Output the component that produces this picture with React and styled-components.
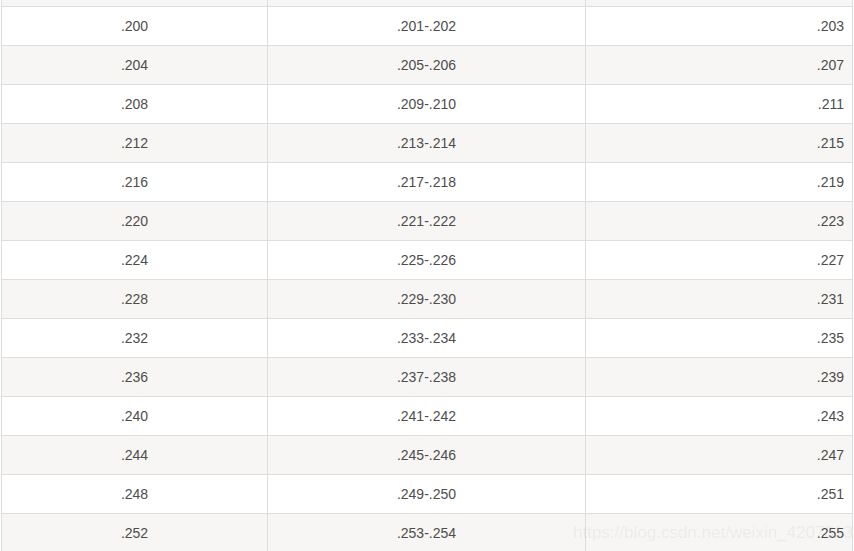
import React from "react";
import styled, { createGlobalStyle } from "styled-components";

const Global = createGlobalStyle`
  html, body { margin: 0; padding: 0; background: #ffffff; }
  body { font-family: "Liberation Sans", Arial, sans-serif; overflow: hidden; }
`;

const Viewport = styled.div`
  position: relative;
  width: 854px;
  height: 551px;
  overflow: hidden;
`;

const Table = styled.div`
  margin-left: 1px;
  width: 852px;
  box-sizing: border-box;
  border-left: 1px solid #dddddd;
  margin-top: -33px;
`;

const Row = styled.div`
  display: grid;
  grid-template-columns: 266px 318px 267px;
  height: 39px;
  box-sizing: border-box;
  border-top: 1px solid #dddddd;
  background: ${(p) => (p.$striped ? "#f7f6f4" : "#ffffff")};
`;

const Cell = styled.div`
  display: flex;
  align-items: center;
  justify-content: ${(p) => (p.$align === "right" ? "flex-end" : "center")};
  padding-right: ${(p) => (p.$align === "right" ? "8px" : "0")};
  box-sizing: border-box;
  border-right: 1px solid #dddddd;
  font-size: 14px;
  color: #4d4d4d;
  white-space: nowrap;
`;

const Watermark = styled.div`
  position: absolute;
  left: 573px;
  top: 524px;
  font-family: "Liberation Sans", Arial, sans-serif;
  font-size: 17px;
  line-height: 17px;
  color: rgba(150, 150, 150, 0.13);
  white-space: nowrap;
  pointer-events: none;
`;

const pad = (n) => "." + String(n);

export default function App() {
  const rows = [];
  for (let i = 0; i < 15; i++) {
    const base = 196 + i * 4;
    rows.push({
      key: base,
      hidden: i === 0,
      a: pad(base),
      b: `${pad(base + 1)}-${pad(base + 2)}`,
      c: pad(base + 3),
      striped: i % 2 === 0,
    });
  }
  return (
    <>
      <Global />
      <Viewport>
        <Table>
          {rows.map((r) => (
            <Row key={r.key} $striped={r.striped}>
              <Cell>{r.hidden ? null : r.a}</Cell>
              <Cell>{r.hidden ? null : r.b}</Cell>
              <Cell $align="right">{r.hidden ? null : r.c}</Cell>
            </Row>
          ))}
        </Table>
        <Watermark>https://blog.csdn.net/weixin_42073136</Watermark>
      </Viewport>
    </>
  );
}
